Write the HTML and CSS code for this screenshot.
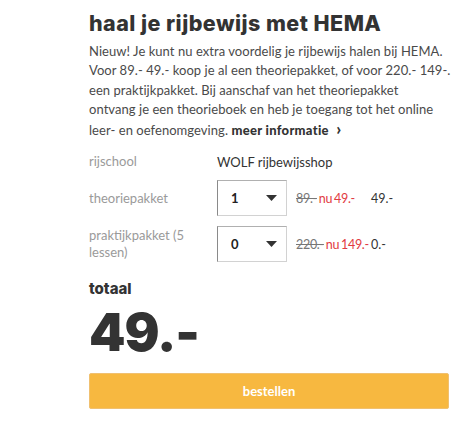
FILE: index.html
```html
<!DOCTYPE html>
<html lang="nl">
<head>
    <meta charset="UTF-8">
    <meta name="viewport" content="width=device-width, initial-scale=1.0">
    <title>Rijbewijs bij HEMA</title>
    <link rel="stylesheet" href="styles.css">
</head>
<body>
    <div class="rijbewijs">
        <h1>haal je rijbewijs met HEMA</h1>
        <p class="intro">
            Nieuw! Je kunt nu extra voordelig je rijbewijs halen bij HEMA.<br>
            Voor 89.- 49.- koop je al een theoriepakket, of voor 220.- 149-.<br>
            een praktijkpakket. Bij aanschaf van het theoriepakket<br>
            ontvang je een theorieboek en heb je toegang tot het online<br>
            leer- en oefenomgeving. <a href="#" class="meer">meer informatie <span class="pijl">&#x203A;</span></a>
        </p>

        <div class="bestel-rij eerste">
            <div class="label">rijschool</div>
            <div class="school">WOLF rijbewijsshop</div>
        </div>

        <div class="bestel-rij">
            <div class="label">theoriepakket</div>
            <div class="keuze">
                <span class="aantal">1</span>
                <svg class="pijltje" width="11" height="6" viewBox="0 0 11 6"><path d="M0 0 H11 L5.5 6 Z" fill="#333"/></svg>
            </div>
            <div class="prijs">
                <span class="oud">89.-</span>
                <span class="nu">nu 49.-</span>
            </div>
            <div class="subtotaal">49.-</div>
        </div>

        <div class="bestel-rij">
            <div class="label">praktijkpakket (5 lessen)</div>
            <div class="keuze">
                <span class="aantal">0</span>
                <svg class="pijltje" width="11" height="6" viewBox="0 0 11 6"><path d="M0 0 H11 L5.5 6 Z" fill="#333"/></svg>
            </div>
            <div class="prijs">
                <span class="oud">220.-</span>
                <span class="nu">nu 149.-</span>
            </div>
            <div class="subtotaal">0.-</div>
        </div>

        <div class="totaal">
            <h3>totaal</h3>
            <div class="bedrag">49.-</div>
        </div>

        <button class="bestellen">bestellen</button>
    </div>
</body>
</html>
```

FILE: styles.css
```css
* {
    margin: 0;
    padding: 0;
    box-sizing: border-box;
}

body {
    font-family: "Lato", sans-serif;
    background-color: #FFFFFF;
    color: #444444;
}

.rijbewijs {
    width: 360px;
    margin-left: 89px;
    padding-top: 9px;
}

h1 {
    font-family: "Inter", sans-serif;
    font-size: 21.5px;
    font-weight: 800;
    color: #333333;
    line-height: 28px;
    margin-bottom: 5px;
    letter-spacing: 0.45px;
}

.intro {
    font-size: 13px;
    line-height: 19.3px;
    color: #4a4a4a;
    white-space: nowrap;
    letter-spacing: 0.05px;
}

.meer {
    color: #333333;
    font-weight: 900;
    text-decoration: none;
    letter-spacing: 0.3px;
}

.pijl {
    font-size: 17px;
    margin-left: 4px;
}

.bestel-rij {
    display: flex;
    align-items: center;
    font-size: 13px;
    margin-top: 10px;
}

.bestel-rij.eerste {
    margin-top: 13px;
    margin-bottom: 8px;
}

.label {
    width: 128px;
    flex-shrink: 0;
    color: #9a9a9a;
    line-height: 17px;
    padding-right: 20px;
}

.school {
    color: #333333;
}

.keuze {
    width: 70px;
    height: 36px;
    flex-shrink: 0;
    border: 1px solid #d2d2d2;
    border-left-color: #8a8a8a;
    border-top-color: #b0b0b0;
    display: flex;
    align-items: center;
    justify-content: space-between;
    padding: 0 9px 0 13px;
    color: #222222;
    font-weight: bold;
}

.prijs {
    width: 82px;
    flex-shrink: 0;
    padding-left: 9px;
    white-space: nowrap;
    font-size: 12.5px;
    letter-spacing: -0.3px;
    word-spacing: -1px;
}

.oud {
    color: #777777;
    text-decoration: line-through;
}

.nu {
    color: #e23a42;
}

.subtotaal {
    color: #333333;
    font-size: 12.5px;
    padding-left: 2px;
}

.totaal {
    margin-top: 18px;
}

.totaal h3 {
    font-family: "Inter", sans-serif;
    font-size: 15px;
    font-weight: 800;
    color: #333333;
    line-height: 18px;
}

.bedrag {
    font-family: "Inter", sans-serif;
    font-size: 52px;
    font-weight: 900;
    color: #333333;
    line-height: 52px;
    letter-spacing: -1px;
    margin-top: 9px;
}

.bestellen {
    display: block;
    width: 360px;
    height: 36px;
    margin-top: 14px;
    border: 1px solid #f0c070;
    border-radius: 2px;
    background-color: #f7b840;
    color: #FFFFFF;
    font-family: "Lato", sans-serif;
    font-size: 13px;
    font-weight: bold;
}
```
